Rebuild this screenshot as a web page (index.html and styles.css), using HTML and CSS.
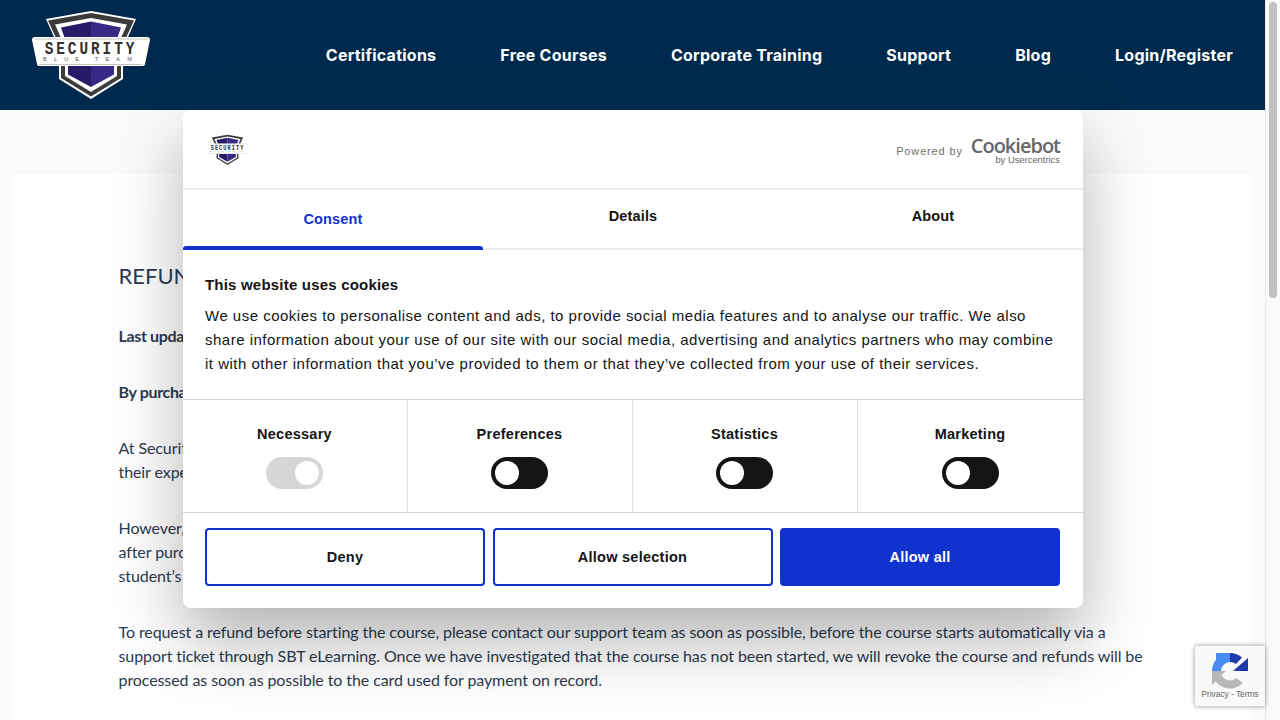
FILE: index.html
```html
<!DOCTYPE html>
<html lang="en">
<head>
<meta charset="utf-8">
<title>Refund Policy - Security Blue Team</title>
<link rel="stylesheet" href="styles.css">
</head>
<body>
<svg class="defs" width="0" height="0" aria-hidden="true">
  <symbol id="sbt-logo" viewBox="0 0 118 88">
    <path d="M59 0 L14 8 L22 26 L27 54 L27 68 L59 88 L91 68 L91 54 L96 26 L104 8 Z" fill="#fff"/>
    <path d="M59 2 L16 9.500 L24 27 L29 54 L29 67 L59 85.500 L89 67 L89 54 L94 27 L102 9.500 Z" fill="#3b3b3b"/>
    <path d="M59 7 L23 13.500 L29 27 L33 54 L33 65 L59 81 L85 65 L85 54 L89 27 L95 13.500 Z" fill="#fff"/>
    <path d="M59 10.500 L29 16.500 L33 28 L36 54 L36 63.500 L59 76 Z" fill="#271a66"/>
    <path d="M59 10.500 L89 16.500 L85 28 L82 54 L82 63.500 L59 76 Z" fill="#392986"/>
    <path d="M3 26 L115 26 Q118 26 118 29 L113 53 Q113 55 110 55 L8 55 Q5 55 5 53 L0 29 Q0 26 3 26 Z" fill="#fff"/>
    <path d="M2 28 L116 28" stroke="#c4c4c4" stroke-width="1"/>
    <path d="M7 53.500 L111 53.500" stroke="#c4c4c4" stroke-width="1"/>
    <text class="logo-main" transform="translate(59 43) scale(.8 1)" text-anchor="middle">SECURITY</text>
    <text class="logo-sub" x="59" y="50" text-anchor="middle">BLUE TEAM</text>
  </symbol>
</svg>

<div class="viewport">
  <div class="page">
    <header class="site-header">
      <a class="site-logo" href="#"><svg class="site-logo-img"><use href="#sbt-logo"/></svg></a>
      <nav class="site-nav">
        <a href="#">Certifications</a>
        <a href="#">Free Courses</a>
        <a href="#">Corporate Training</a>
        <a href="#">Support</a>
        <a href="#">Blog</a>
        <a href="#">Login/Register</a>
      </nav>
    </header>
    <main class="site-main">
      <article class="card">
        <h1>REFUND POLICY</h1>
        <p class="strong">Last updated: January 2023</p>
        <p class="strong">By purchasing a course, you agree to this refund policy.</p>
        <p>At Security Blue Team, we stand behind our training courses and we want every student to be fully satisfied and for our courses to meet<br>their expectations when they begin their learning journey with us.</p>
        <p>However, we understand that sometimes a course is not the right fit, and students may request a refund within a period of fourteen days<br>after purchasing, provided that the course has not been started, which is verified by our team using the activity recorded on the<br>student’s account.</p>
        <p>To request a refund before starting the course, please contact our support team as soon as possible, before the course starts automatically via a<br>support ticket through SBT eLearning. Once we have investigated that the course has not been started, we will revoke the course and refunds will be<br>processed as soon as possible to the card used for payment on record.</p>
      </article>
    </main>
  </div>
  <div class="scrollbar"><div class="scrollbar-thumb"></div></div>

  <section class="cookie-dialog">
    <div class="cd-head">
      <svg class="cd-logo"><use href="#sbt-logo"/></svg>
      <div class="cd-powered">
        <span class="cd-powered-by">Powered by</span>
        <span class="cd-brand"><span class="cd-brand-name">Cookiebot</span><span class="cd-brand-sub">by Usercentrics</span></span>
      </div>
    </div>
    <div class="cd-tabs">
      <div class="cd-tab active">Consent</div>
      <div class="cd-tab">Details</div>
      <div class="cd-tab">About</div>
    </div>
    <div class="cd-body">
      <h2>This website uses cookies</h2>
      <p>We use cookies to personalise content and ads, to provide social media features and to analyse our traffic. We also share information about your use of our site with our social media, advertising and analytics partners who may combine it with other information that you’ve provided to them or that they’ve collected from your use of their services.</p>
    </div>
    <div class="cd-toggles">
      <div class="cd-toggle-cell"><span>Necessary</span><i class="switch on"></i></div>
      <div class="cd-toggle-cell"><span>Preferences</span><i class="switch"></i></div>
      <div class="cd-toggle-cell"><span>Statistics</span><i class="switch"></i></div>
      <div class="cd-toggle-cell"><span>Marketing</span><i class="switch"></i></div>
    </div>
    <div class="cd-actions">
      <button class="btn">Deny</button>
      <button class="btn">Allow selection</button>
      <button class="btn primary">Allow all</button>
    </div>
  </section>

  <aside class="recaptcha">
    <svg class="recaptcha-icon" viewBox="0 0 36 37">
      <path d="M0 19 H9 A9 9 0 0 0 24 26 L31 31 A18 18 0 0 1 0 19 Z" fill="#b7b7b7"/>
      <path d="M0 33 V19 H14 Z" fill="#b7b7b7"/>
      <path d="M0 19 A18 18 0 0 1 18 1 V10 A9 9 0 0 0 9 19 Z" fill="#4a8af4"/>
      <path d="M4 1 H18 L4 15 Z" fill="#4a8af4"/>
      <path d="M18 1 A18 18 0 0 1 30 5.500 L24 12 A9 9 0 0 0 18 10 Z" fill="#1c3aa9"/>
      <path d="M36 6 V19 H21 Z" fill="#1c3aa9"/>
    </svg>
    <div class="recaptcha-links">Privacy - Terms</div>
  </aside>
</div>
</body>
</html>
```
FILE: styles.css
```css
* { box-sizing: border-box; }
html, body { margin: 0; padding: 0; height: 100%; overflow: hidden; }
body { font-family: "Lato", sans-serif; background: #fafafa; }
.defs { position: absolute; }

.viewport { position: relative; display: flex; width: 1280px; height: 720px; overflow: hidden; }
.page { width: 1265px; flex: none; display: flex; flex-direction: column; background: #fafafa; }

.site-header { flex: none; height: 110px; background: #002a4d; display: flex; align-items: center; justify-content: space-between; padding: 0 32px; }
.site-logo { display: block; }
.site-logo-img { display: block; width: 118px; height: 88px; }
.site-nav { display: flex; gap: 64px; }
.site-nav a { color: #fff; text-decoration: none; font-family: "Inter", sans-serif; font-weight: 700; font-size: 16px; line-height: 24px; letter-spacing: .25px; white-space: nowrap; }

.logo-main { font-family: "Liberation Mono", monospace; font-weight: 700; font-size: 18px; letter-spacing: 3.700px; fill: #303030; }
.logo-sub { font-family: "Liberation Sans", sans-serif; font-size: 5.500px; letter-spacing: 7.200px; fill: #555; }

.site-main { flex: 1; padding: 64px 13px 0 12px; min-height: 0; }
.card { background: #fff; height: 100%; padding: 88px 100px 0 106.500px; color: #2b3a4e; font-size: 16px; line-height: 24px; letter-spacing: -.09px; }
.card h1 { margin: 0 0 34px; font-size: 22px; line-height: 28px; font-weight: 400; color: #2b3a4e; letter-spacing: 0; }
.card p { margin: 0 0 32px; white-space: nowrap; }
.card p.strong { font-weight: 700; letter-spacing: -.35px; }

.scrollbar { width: 15px; flex: none; background: #fafafa; border-left: 1px solid #e8e8e8; padding: 2px 3px 0; }
.scrollbar-thumb { width: 8px; height: 296px; border-radius: 4px; background: #c1c1c1; }

.cookie-dialog { position: absolute; left: 183px; top: 110px; width: 900px; height: 498px; background: #fff; border-radius: 8px; box-shadow: 0 32px 68px rgba(0, 0, 0, .3); font-family: "Liberation Sans", sans-serif; color: #141414; display: flex; flex-direction: column; overflow: hidden; }

.cd-head { flex: none; height: 80px; border-bottom: 2px solid #ebebeb; display: flex; align-items: center; justify-content: space-between; padding: 0 23px 0 23px; }
.cd-logo { display: block; width: 43px; height: 32px; margin-top: 1px; }
.cd-powered { display: flex; align-items: center; gap: 8px; margin-top: 1px; color: #6f6f6f; }
.cd-powered-by { font-size: 11px; letter-spacing: .85px; margin-top: 2px; }
.cd-brand { display: flex; flex-direction: column; align-items: flex-end; }
.cd-brand-name { font-family: "Open Sans", sans-serif; font-size: 20px; line-height: 19px; font-weight: 600; letter-spacing: -1px; color: #666; }
.cd-brand-sub { font-size: 9.400px; line-height: 9px; margin-top: 0; color: #666; }

.cd-tabs { flex: none; height: 60px; display: flex; border-bottom: 2px solid #ebebeb; }
.cd-tab { flex: 1; position: relative; display: flex; align-items: center; justify-content: center; font-size: 14.500px; font-weight: 700; letter-spacing: .15px; padding-bottom: 6px; color: #141414; }
.cd-tab.active { color: #1032cf; padding-bottom: 0; }
.cd-tab.active::after { content: ""; position: absolute; left: 0; right: 0; top: 56px; height: 3.500px; background: #1032cf; border-radius: 3px 3px 0 0; }

.cd-body { flex: none; height: 150px; padding: 23px 23px 0 22px; border-bottom: 1px solid #d8d8d8; }
.cd-body h2 { margin: 0 0 7px; font-size: 15px; line-height: 24px; letter-spacing: .2px; font-weight: 700; }
.cd-body p { margin: 0; font-size: 15px; line-height: 24px; letter-spacing: .49px; }

.cd-toggles { flex: none; height: 113px; display: grid; grid-template-columns: 225px 225px 225px 225px; border-bottom: 1px solid #d8d8d8; }
.cd-toggle-cell { display: flex; flex-direction: column; align-items: center; padding: 24px 1px 0 0; gap: 13px; border-right: 1px solid #e0e0e0; font-size: 14.500px; line-height: 20px; font-weight: 700; letter-spacing: .25px; }
.cd-toggle-cell:last-child { border-right: 0; }
.switch { display: flex; align-items: center; justify-content: flex-start; width: 57px; height: 32px; border-radius: 16px; background: #141414; padding: 4px; }
.switch::before { content: ""; display: block; width: 24px; height: 24px; border-radius: 50%; background: #fff; }
.switch.on { background: #d6d6d6; justify-content: flex-end; }

.cd-actions { flex: 1; display: flex; gap: 7.500px; padding: 15px 23px 22px 22px; }
.btn { flex: 1; min-width: 0; border: 2px solid #1032cf; border-radius: 4px; background: #fff; color: #141414; font-family: inherit; font-size: 14.500px; font-weight: 700; letter-spacing: .25px; padding: 0; }
.btn.primary { background: #1032cf; color: #fff; }

.recaptcha { position: absolute; left: 1195px; top: 646px; width: 70px; height: 60px; background: #f9f9f9; border-radius: 2px 0 0 2px; box-shadow: 0 0 5px rgba(0, 0, 0, .45); display: flex; flex-direction: column; align-items: center; color: #666; }
.recaptcha-icon { display: block; width: 36px; height: 37px; margin-top: 6px; flex: none; }
.recaptcha-links { font-family: "Liberation Sans", sans-serif; font-size: 8.300px; line-height: 10px; margin-top: 0; white-space: nowrap; }
```
